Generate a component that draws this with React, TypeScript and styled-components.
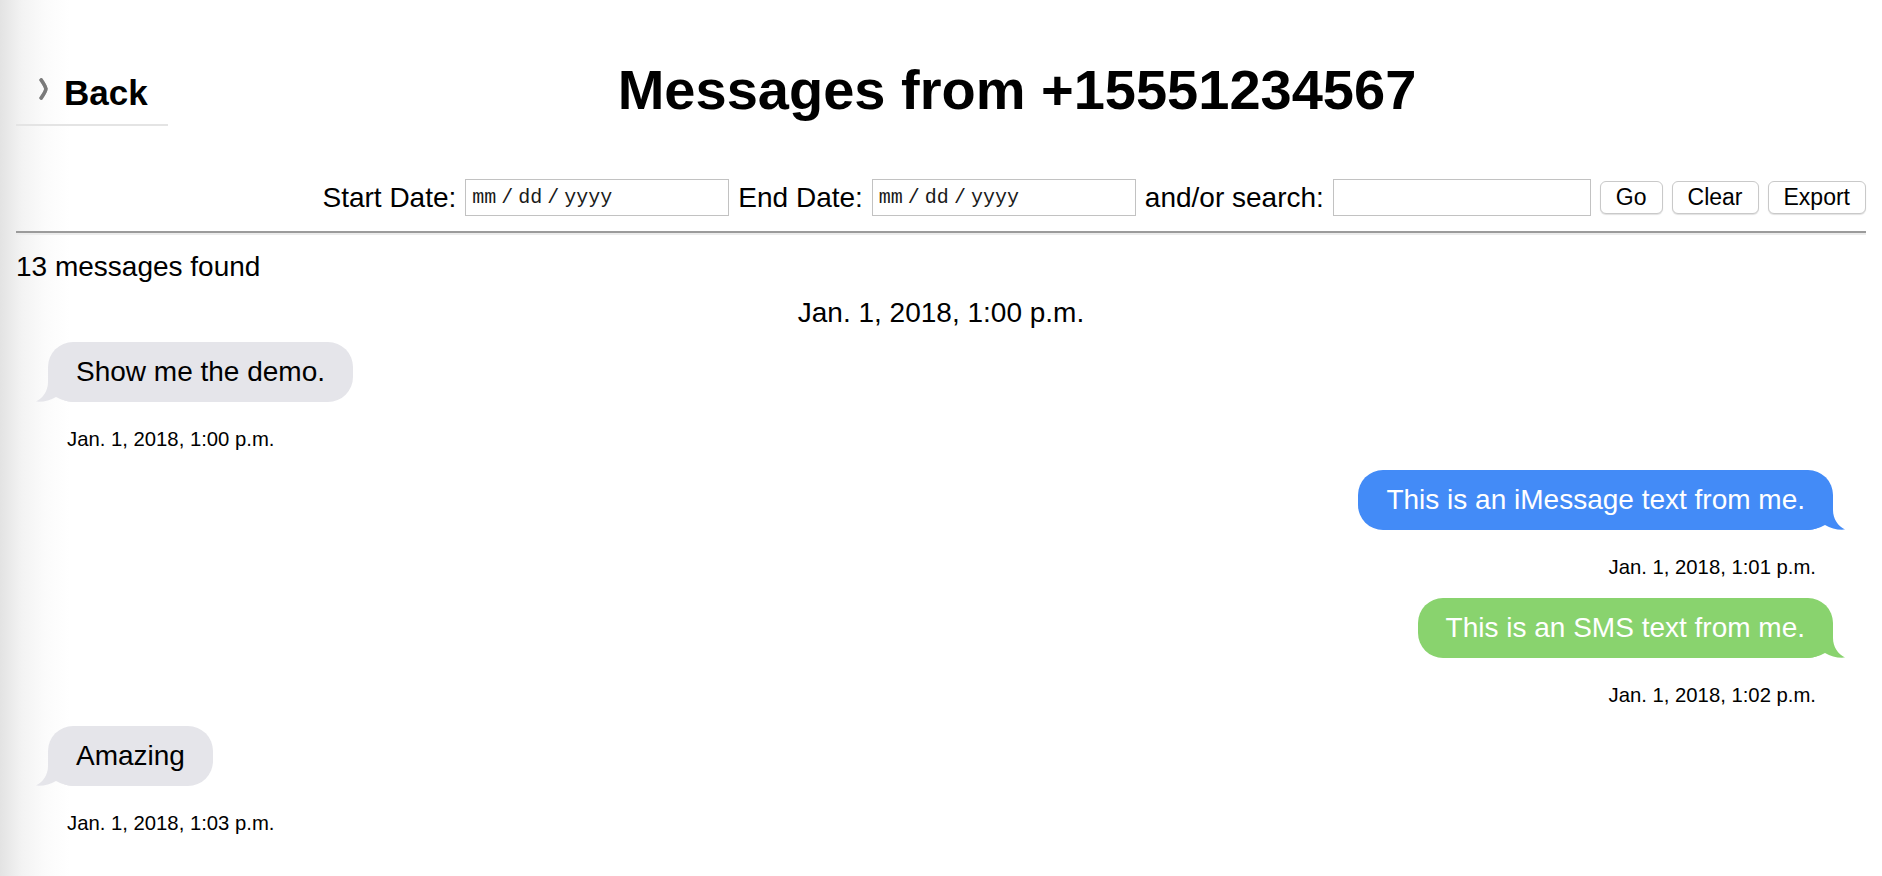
import React from "react";
import styled, { createGlobalStyle } from "styled-components";

const GlobalStyle = createGlobalStyle`
  html, body {
    margin: 0;
    padding: 0;
  }
  body {
    font-family: "Liberation Sans", Arial, Helvetica, sans-serif;
    color: #000;
    background: #fff;
  }
`;

const Page = styled.div`
  min-height: 100vh;
  box-sizing: border-box;
  padding: 0 16px 40px;
  background: linear-gradient(90deg, #e3e3e3 0px, #f3f3f3 22px, #fbfbfb 45px, #ffffff 70px);
  font-family: "Liberation Sans", Arial, Helvetica, sans-serif;
`;

const Header = styled.header`
  display: flex;
  align-items: flex-start;
  padding-top: 58px;
`;

const BackLink = styled.a`
  display: flex;
  align-items: flex-start;
  gap: 16px;
  width: 152px;
  box-sizing: border-box;
  margin-top: 15px;
  padding: 0 0 11px 23px;
  border-bottom: 2px solid #e4e4e4;
  font-weight: bold;
  font-size: 35px;
  line-height: 40px;
  color: #000;
  text-decoration: none;
`;

const Chevron = styled.svg`
  flex: none;
  margin-top: 5px;
  width: 9px;
  height: 22px;
  filter: drop-shadow(0.6px 0.6px 0.6px rgba(0, 0, 0, 0.3));
`;

const Title = styled.h1`
  flex: 1;
  margin: 0;
  text-align: center;
  font-weight: bold;
  font-size: 56px;
  line-height: 64px;
`;

const FilterRow = styled.form`
  display: flex;
  justify-content: flex-end;
  align-items: center;
  gap: 9px;
  margin: 53px 0 0;
`;

const Label = styled.label`
  font-size: 28px;
  line-height: 32px;
  white-space: nowrap;
`;

const Field = styled.input<{ $w: number; $mono?: boolean }>`
  box-sizing: border-box;
  width: ${(p) => p.$w}px;
  height: 37px;
  margin: 0;
  padding: 0 6px;
  border: 1px solid #c2c2c2;
  border-radius: 0;
  background: #fff;
  outline: none;
  font-family: ${(p) =>
    p.$mono ? `"Liberation Mono", "Courier New", monospace` : `"Liberation Sans", Arial, sans-serif`};
  font-size: 20px;
  word-spacing: -7px;
  &::placeholder {
    color: #1a1a1a;
    opacity: 1;
  }
`;

const Button = styled.button`
  box-sizing: border-box;
  height: 33px;
  margin: 0;
  padding: 0 15px;
  border: 1px solid #c9c9c9;
  border-radius: 6px;
  background: #fff;
  box-shadow: 0 1px 1px rgba(0, 0, 0, 0.12);
  font-family: "Liberation Sans", Arial, sans-serif;
  font-size: 23px;
  line-height: 31px;
  color: #000;
`;

const Rule = styled.hr`
  height: 0;
  margin: 15px 0 0;
  border: 0;
  border-top: 2px solid #9b9b9b;
  border-bottom: 2px solid #ececec;
`;

const Count = styled.div`
  margin-top: 16px;
  font-size: 28px;
  line-height: 32px;
`;

const DateHeader = styled.div`
  margin-top: 14px;
  text-align: center;
  font-size: 28px;
  line-height: 32px;
`;

const Thread = styled.div`
  display: flex;
  flex-direction: column;
  gap: 19px;
  margin-top: 13px;
`;

const MessageBlock = styled.div<{ $mine: boolean }>`
  display: flex;
  flex-direction: column;
  align-items: ${(p) => (p.$mine ? "flex-end" : "flex-start")};
  padding: ${(p) => (p.$mine ? "0 33px 0 0" : "0 0 0 32px")};
`;

const Bubble = styled.div<{ $bg: string; $fg: string }>`
  position: relative;
  box-sizing: border-box;
  height: 60px;
  padding: 14px 28px;
  border-radius: 25px;
  background: ${(p) => p.$bg};
  color: ${(p) => p.$fg};
  font-size: 28px;
  line-height: 32px;
  white-space: nowrap;
`;

const BubbleText = styled.span`
  position: relative;
  z-index: 1;
`;

const TailSvg = styled.svg<{ $mine: boolean }>`
  position: absolute;
  bottom: 0;
  width: 40px;
  height: 26px;
  ${(p) => (p.$mine ? "right: -12px; transform: scaleX(-1);" : "left: -12px;")}
`;

const Stamp = styled.div<{ $mine: boolean }>`
  margin-top: 25px;
  font-size: 20.3px;
  line-height: 24px;
  ${(p) => (p.$mine ? "margin-right: 17px;" : "margin-left: 19px;")}
`;

type Msg = { text: string; time: string; mine: boolean; kind: "them" | "imessage" | "sms" };

const messages: Msg[] = [
  { text: "Show me the demo.", time: "Jan. 1, 2018, 1:00 p.m.", mine: false, kind: "them" },
  { text: "This is an iMessage text from me.", time: "Jan. 1, 2018, 1:01 p.m.", mine: true, kind: "imessage" },
  { text: "This is an SMS text from me.", time: "Jan. 1, 2018, 1:02 p.m.", mine: true, kind: "sms" },
  { text: "Amazing", time: "Jan. 1, 2018, 1:03 p.m.", mine: false, kind: "them" },
];

const palette = {
  them: { bg: "#e5e5ea", fg: "#000" },
  imessage: { bg: "#438bf7", fg: "#fff" },
  sms: { bg: "#89d36e", fg: "#fff" },
};

function Tail({ mine, color }: { mine: boolean; color: string }) {
  return (
    <TailSvg $mine={mine} viewBox="0 0 40 26" aria-hidden="true">
      <path
        d="M12 0 L12 6 C12 15 7 22 0 25.6 C7 26.3 14 24.5 20 21 C26 24.5 33 26 40 26 L40 0 Z"
        fill={color}
      />
    </TailSvg>
  );
}

export default function App() {
  return (
    <>
      <GlobalStyle />
      <Page>
        <Header>
          <BackLink href="#">
            <Chevron viewBox="0 0 9 22" aria-hidden="true">
              <path
                d="M2.2 2 Q7 9 6.8 11 Q7 13 2.2 20"
                fill="none"
                stroke="#7a7a7a"
                strokeWidth="3.6"
                strokeLinecap="round"
              />
            </Chevron>
            Back
          </BackLink>
          <Title>Messages from +15551234567</Title>
        </Header>

        <FilterRow onSubmit={(e) => e.preventDefault()}>
          <Label>Start Date:</Label>
          <Field $w={264} $mono placeholder="mm / dd / yyyy" />
          <Label>End Date:</Label>
          <Field $w={264} $mono placeholder="mm / dd / yyyy" />
          <Label>and/or search:</Label>
          <Field $w={258} />
          <Button type="submit">Go</Button>
          <Button type="button">Clear</Button>
          <Button type="button">Export</Button>
        </FilterRow>

        <Rule />

        <Count>13 messages found</Count>
        <DateHeader>Jan. 1, 2018, 1:00 p.m.</DateHeader>

        <Thread>
          {messages.map((m, i) => {
            const c = palette[m.kind];
            return (
              <MessageBlock key={i} $mine={m.mine}>
                <Bubble $bg={c.bg} $fg={c.fg}>
                  <Tail mine={m.mine} color={c.bg} />
                  <BubbleText>{m.text}</BubbleText>
                </Bubble>
                <Stamp $mine={m.mine}>{m.time}</Stamp>
              </MessageBlock>
            );
          })}
        </Thread>
      </Page>
    </>
  );
}
